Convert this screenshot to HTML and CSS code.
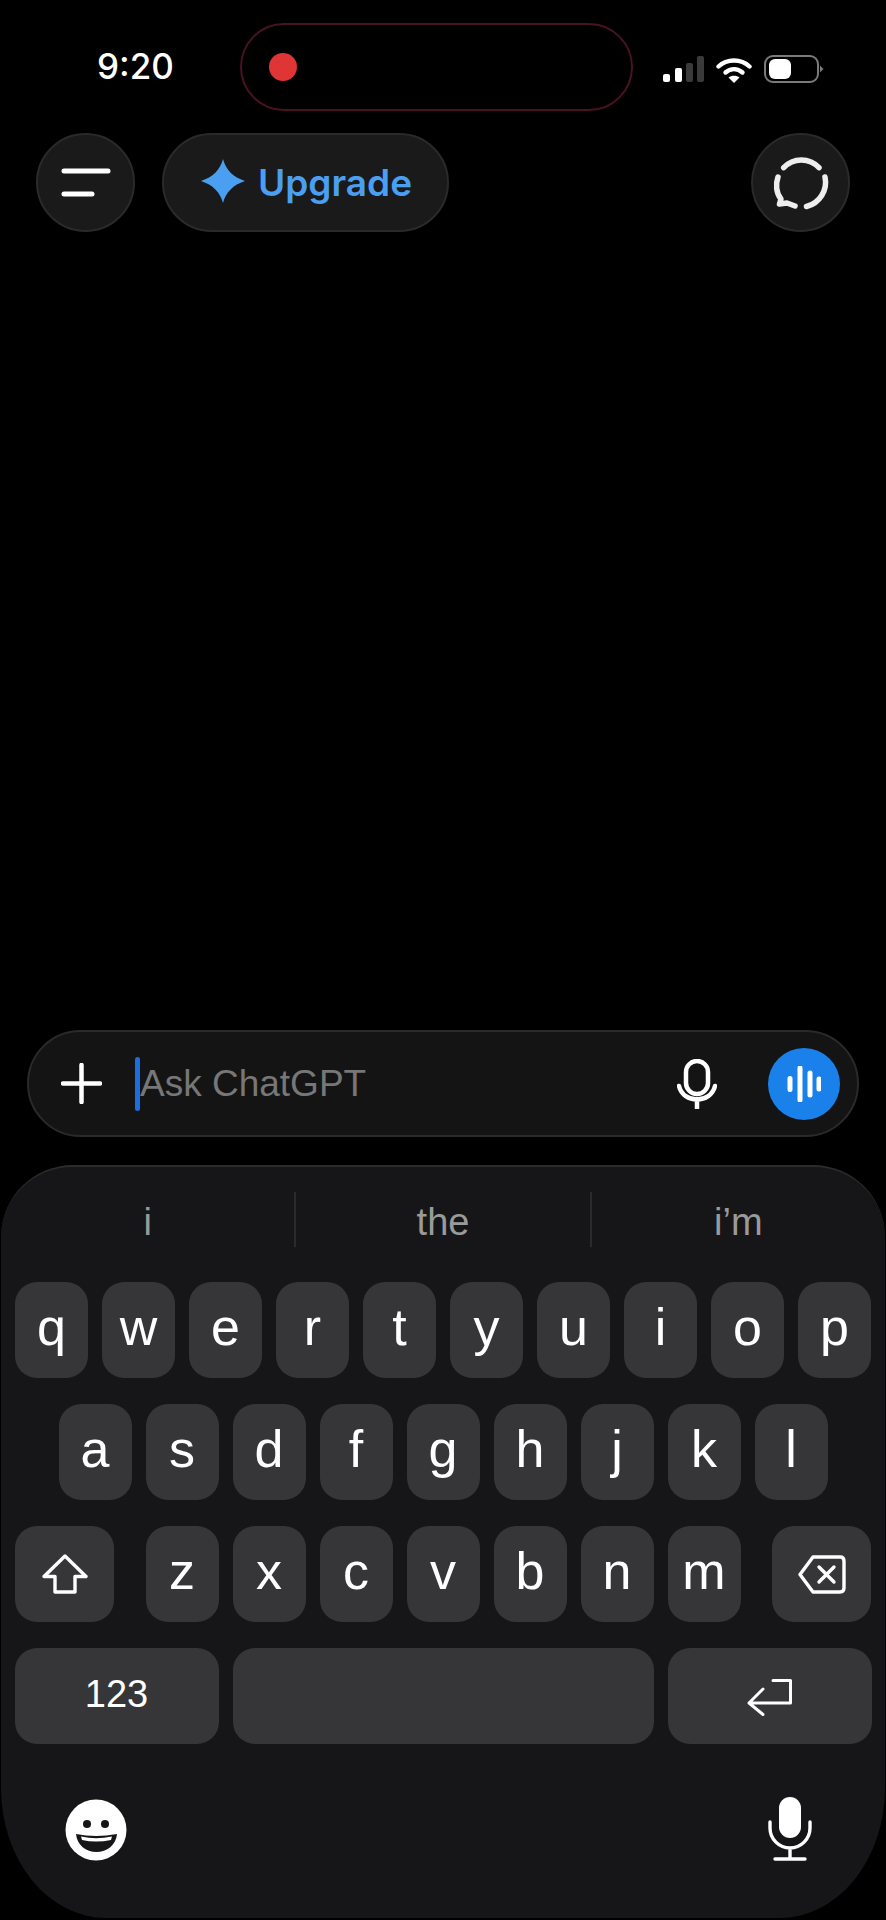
FILE: index.html
```html
<!DOCTYPE html>
<html lang="en">
<head>
<meta charset="utf-8">
<title>ChatGPT</title>
<link rel="stylesheet" href="styles.css">
</head>
<body>
<div class="screen">
  <header class="status">
    <span class="time">9:20</span>
    <div class="island"><span class="rec"></span></div>
    <div class="status-icons">
      <svg class="signal" viewBox="0 0 41 26"><rect x="0" y="18" width="7" height="8" rx="2" fill="#fff"/><rect x="12" y="12" width="7" height="14" rx="2" fill="#fff"/><rect x="23" y="7" width="7" height="19" rx="2" fill="#3a3a3a"/><rect x="34" y="0" width="7" height="26" rx="2" fill="#3a3a3a"/></svg>
      <svg class="wifi" viewBox="0 0 36 27"><path d="M2.500 10.500C11 2.500 25 2.500 33.500 10.500" fill="none" stroke="#fff" stroke-width="4.400" stroke-linecap="round"/><path d="M9.500 16.500C14.500 12 21.500 12 26.500 16.500" fill="none" stroke="#fff" stroke-width="4.400" stroke-linecap="round"/><path d="M18 27L12.500 21.500C15.500 19 20.500 19 23.500 21.500Z" fill="#fff"/></svg>
      <svg class="battery" viewBox="0 0 60 28"><rect x="1" y="1" width="53" height="26" rx="8" fill="none" stroke="#7a7a7a" stroke-width="2"/><rect x="5" y="4" width="22" height="20" rx="6" fill="#fff"/><path d="M56 10.500L59.500 14L56 17.500Z" fill="#7a7a7a"/></svg>
    </div>
  </header>

  <nav class="toolbar">
    <button class="round">
      <svg class="menu-icon" viewBox="0 0 50 30"><path d="M3 3H47M3 26H31" stroke="#fff" stroke-width="5" stroke-linecap="round" fill="none"/></svg>
    </button>
    <button class="upgrade">
      <svg class="star" viewBox="0 0 44 44"><path d="M22 0C25 11 32 18 44 22C32 26 25 33 22 44C19 33 12 26 0 22C12 18 19 11 22 0Z" fill="#4a9ff0"/></svg>
      <span>Upgrade</span>
    </button>
    <button class="round new-chat">
      <svg class="chat-icon" viewBox="0 0 80 75"><g fill="none" stroke="#eeeeee" stroke-width="5.500" stroke-linecap="round" stroke-linejoin="round"><path d="M22.700 22.700A24 24 0 0 1 58 22.700"/><path d="M64 32A25 25 0 0 1 45.500 61.500"/><path d="M17 32C14.500 39 15 48 20 54L18.500 59L26 58L34 61"/></g></svg>
    </button>
  </nav>

  <main class="content"></main>

  <section class="composer">
    <svg class="plus" viewBox="0 0 41 41"><path d="M20.500 2V39M2 20.500H39" stroke="#fff" stroke-width="4.500" stroke-linecap="round"/></svg>
    <span class="caret"></span>
    <span class="placeholder">Ask ChatGPT</span>
    <svg class="mic-line" viewBox="0 0 40 50"><rect x="9" y="2" width="22" height="33" rx="11" fill="none" stroke="#fff" stroke-width="4.500"/><path d="M2 27C6 45 34 45 38 27M20 40V49" fill="none" stroke="#fff" stroke-width="4.500" stroke-linecap="round"/></svg>
    <button class="voice">
      <svg class="wave" viewBox="0 0 34 36"><path d="M3 12.500V23.500M13 2V34M23 7V29M32 13V23" stroke="#fff" stroke-width="5" stroke-linecap="round"/></svg>
    </button>
  </section>

  <section class="keyboard">
    <div class="suggestions">
      <span class="suggestion">i</span>
      <span class="suggestion">the</span>
      <span class="suggestion">i’m</span>
    </div>
    <div class="row">
      <span class="key">q</span><span class="key">w</span><span class="key">e</span><span class="key">r</span><span class="key">t</span><span class="key">y</span><span class="key">u</span><span class="key">i</span><span class="key">o</span><span class="key">p</span>
    </div>
    <div class="row">
      <span class="key">a</span><span class="key">s</span><span class="key">d</span><span class="key">f</span><span class="key">g</span><span class="key">h</span><span class="key">j</span><span class="key">k</span><span class="key">l</span>
    </div>
    <div class="row row-three">
      <span class="key key-side">
        <svg class="shift" viewBox="0 0 46 40"><path d="M23 2L44 22.500H33V38H13V22.500H2Z" fill="none" stroke="#fff" stroke-width="3.400" stroke-linejoin="round"/></svg>
      </span>
      <div class="letters">
        <span class="key">z</span><span class="key">x</span><span class="key">c</span><span class="key">v</span><span class="key">b</span><span class="key">n</span><span class="key">m</span>
      </div>
      <span class="key key-side">
        <svg class="delete" viewBox="0 0 48 39"><path d="M15 2H42Q46 2 46 6V33Q46 37 42 37H15L2 19.500Z" fill="none" stroke="#fff" stroke-width="3.400" stroke-linejoin="round"/><path d="M21 12L36 27M36 12L21 27" stroke="#fff" stroke-width="3.400" stroke-linecap="round"/></svg>
      </span>
    </div>
    <div class="row">
      <span class="key key-wide num">123</span>
      <span class="key key-space"></span>
      <span class="key key-wide">
        <svg class="return" viewBox="0 0 46 38"><path d="M26 2.500H43.500V25H2M16 11L2 25L16 36.500" fill="none" stroke="#fff" stroke-width="3" stroke-linecap="round" stroke-linejoin="round"/></svg>
      </span>
    </div>
    <div class="kb-bottom">
      <svg class="emoji" viewBox="0 0 62 62"><circle cx="31" cy="31" r="30.500" fill="#fff"/><circle cx="22" cy="25" r="4" fill="#161618"/><circle cx="40" cy="25" r="4" fill="#161618"/><path d="M11 35Q31 39 52 35C51 46 42 53 31.500 53C21 53 12 46 11 35Z" fill="#161618"/><path d="M16 37.500Q31 41 47 37.500L46 41Q31 44 17 41Z" fill="#fff"/></svg>
      <svg class="mic-solid" viewBox="0 0 44 64"><rect x="11" y="0" width="22" height="41" rx="11" fill="#fff"/><path d="M2 25V31C2 42 11 51 22 51C33 51 42 42 42 31V25M22 51V61M7 62H37" fill="none" stroke="#fff" stroke-width="3.400" stroke-linecap="round"/></svg>
    </div>
  </section>
</div>
</body>
</html>
```

FILE: styles.css
```css
* { box-sizing: border-box; }

html, body {
  margin: 0;
  padding: 0;
  background: #000;
}

body {
  font-family: Inter, "Liberation Sans", sans-serif;
  color: #fff;
}

svg { display: block; flex: none; }

button {
  font: inherit;
  color: inherit;
  padding: 0;
  cursor: pointer;
}

.screen {
  width: 886px;
  height: 1920px;
  display: flex;
  flex-direction: column;
  overflow: hidden;
}

/* Status bar */
.status {
  height: 133px;
  padding: 23px 0 0 97px;
  display: flex;
  align-items: flex-start;
}

.time {
  width: 143px;
  height: 87px;
  line-height: 87px;
  font-size: 35px;
  font-weight: 500;
}

.island {
  width: 393px;
  height: 88px;
  border: 2px solid #4a1225;
  border-radius: 44px;
  padding-left: 27px;
  display: flex;
  align-items: center;
}

.rec {
  width: 28px;
  height: 28px;
  border-radius: 50%;
  background: #e03535;
}

.status-icons {
  height: 88px;
  margin-left: 30px;
  display: flex;
  align-items: center;
}

.signal { width: 41px; height: 26px; margin-top: 4px; }
.wifi { width: 36px; height: 27px; margin: 4px 0 0 12px; }
.battery { width: 60px; height: 28px; margin: 4px 0 0 12px; }

/* Toolbar */
.toolbar {
  display: flex;
  padding: 0 36px 0 36px;
}

.round {
  width: 99px;
  height: 99px;
  border-radius: 50%;
  background: #1a1a1b;
  border: 2px solid #2a2a2a;
  display: flex;
  align-items: center;
  justify-content: center;
}

.menu-icon { width: 50px; height: 30px; margin-left: 1px; }

.upgrade {
  width: 287px;
  height: 99px;
  margin-left: 27px;
  border-radius: 50px;
  background: #1a1a1b;
  border: 2px solid #2a2a2a;
  display: flex;
  align-items: center;
  padding-left: 37px;
  gap: 13px;
  color: #4a9ff0;
  font-size: 37px;
  font-weight: 600;
}

.star { width: 44px; height: 44px; margin-top: -3px; }

.new-chat { margin-left: auto; }
.chat-icon { width: 80px; height: 75px; }

.content { flex: 1; }

/* Composer */
.composer {
  width: 832px;
  height: 107px;
  margin: 0 0 28px 27px;
  background: #141415;
  border: 2px solid #2a2a2b;
  border-radius: 54px;
  display: flex;
  align-items: center;
  font-family: "Liberation Sans", sans-serif;
}

.plus { width: 41px; height: 41px; margin-left: 32px; }

.caret {
  width: 5px;
  height: 54px;
  margin-left: 33px;
  border-radius: 3px;
  background: #1a6fe0;
}

.placeholder {
  font-size: 37px;
  color: #777;
  flex: 1;
}

.mic-line { width: 40px; height: 50px; }

.voice {
  width: 72px;
  height: 72px;
  margin: 0 17px 0 51px;
  border: 0;
  border-radius: 50%;
  background: #1a80ea;
  display: flex;
  align-items: center;
  justify-content: center;
}

.wave { width: 34px; height: 36px; }

/* Keyboard */
.keyboard {
  flex: none;
  height: 753px;
  margin: 0 1px 2px;
  background: #161618;
  border-top: 2px solid #2b2b2d;
  border-radius: 72px 72px 105px 105px / 72px 72px 130px 130px;
  display: flex;
  flex-direction: column;
  padding: 25px 0 0;
  font-family: "Liberation Sans", sans-serif;
}

.suggestions {
  display: flex;
  height: 90px;
  align-items: flex-start;
}

.suggestion {
  flex: 1;
  height: 55px;
  line-height: 60px;
  text-align: center;
  font-size: 38px;
  color: #9a9a9a;
  border-left: 2px solid #2b2b2d;
}

.suggestion:first-child { border-left: 0; }

.row {
  display: flex;
  justify-content: center;
  gap: 14px;
  margin-bottom: 26px;
}

.row-three { justify-content: space-between; gap: 0; padding: 0 14px; }

.letters { display: flex; gap: 14px; }

.key {
  width: 73px;
  height: 96px;
  flex: none;
  border-radius: 22px;
  background: #363638;
  display: flex;
  align-items: center;
  justify-content: center;
  font-size: 52px;
  padding-bottom: 6px;
}

.key-side { width: 99px; padding-bottom: 0; }
.key-wide { width: 204px; padding-bottom: 0; }
.key-space { width: 421px; }
.num { font-size: 38px; padding-bottom: 3px; }

.shift { width: 46px; height: 40px; }
.delete { width: 48px; height: 39px; }
.return { width: 46px; height: 38px; margin-top: 2px; }

.kb-bottom {
  display: flex;
  justify-content: space-between;
  align-items: center;
  padding: 0 73px 0 64px;
  height: 118px;
}

.emoji { width: 62px; height: 62px; margin-top: 2px; }
.mic-solid { width: 44px; height: 64px; }
```
